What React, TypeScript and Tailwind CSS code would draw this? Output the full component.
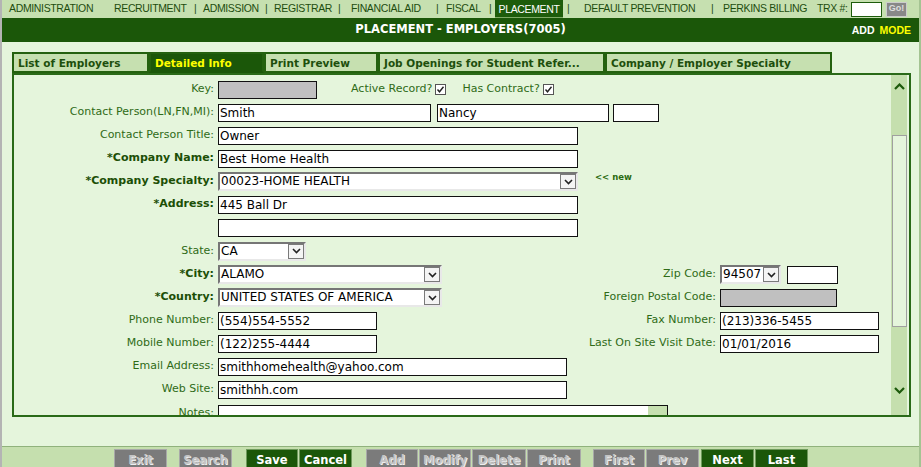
import React from "react";

// nav cells: width of each cell taken from the gap to the next item
const navCells: { label: string; w: string; active?: boolean }[] = [
  { label: "ADMINISTRATION", w: "w-[105px]" },
  { label: "RECRUITMENT", w: "w-[80px]" },
  { label: "|", w: "w-[9px]" },
  { label: "ADMISSION", w: "w-[62px]" },
  { label: "|", w: "w-[9px]" },
  { label: "REGISTRAR", w: "w-[64px]" },
  { label: "|", w: "w-[13px]" },
  { label: "FINANCIAL AID", w: "w-[85px]" },
  { label: "|", w: "w-[10px]" },
  { label: "FISCAL", w: "w-[43px]" },
  { label: "|", w: "w-[6px]" },
  { label: "PLACEMENT", w: "w-[68px]", active: true },
  { label: "", w: "w-[4px]" },
  { label: "|", w: "w-[17px]" },
  { label: "DEFAULT PREVENTION", w: "w-[127px]" },
  { label: "|", w: "w-[12px]" },
  { label: "PERKINS BILLING", w: "w-[94px]" },
  { label: "TRX #:", w: "w-[34px]" },
];

const tabs = [
  { label: "List of Employers", w: "w-[137px]" },
  { label: "Detailed Info", w: "w-[115px]", active: true },
  { label: "Print Preview", w: "w-[114px]" },
  { label: "Job Openings for Student Refer...", w: "w-[227px]" },
  { label: "Company / Employer Specialty", w: "w-[227px]" },
];

const buttons = [
  { label: "Exit", cls: "ml-[112px] w-[53px]" },
  { label: "Search", cls: "ml-[12px] w-[53px]" },
  { label: "Save", cls: "ml-[14px] w-[52px]", on: true },
  { label: "Cancel", cls: "ml-[1px] w-[53px]", on: true },
  { label: "Add", cls: "ml-[14px] w-[52px]" },
  { label: "Modify", cls: "ml-[1px] w-[52px]" },
  { label: "Delete", cls: "ml-[1px] w-[54px]" },
  { label: "Print", cls: "ml-[1px] w-[54px]" },
  { label: "First", cls: "ml-[12px] w-[52px]" },
  { label: "Prev", cls: "ml-[1px] w-[53px]" },
  { label: "Next", cls: "ml-[2px] w-[53px]", on: true },
  { label: "Last", cls: "ml-[1px] w-[53px]", on: true },
];

function Chevron({ up = false }: { up?: boolean }) {
  return (
    <svg width="11" height="7" viewBox="0 0 11 7">
      <path
        d={up ? "M1 6 L5.5 1.5 L10 6" : "M1 1 L5.5 5.5 L10 1"}
        fill="none"
        stroke="#1d5a0c"
        strokeWidth="2.2"
      />
    </svg>
  );
}

function Input({ w, value = "", gray = false }: { w: string; value?: string; gray?: boolean }) {
  return (
    <div
      className={`${w} h-[18px] shrink-0 border border-[#111] ${gray ? "bg-[#c0c0c0]" : "bg-white"} pl-[1px] text-[12px] leading-[16px] text-black whitespace-nowrap overflow-hidden`}
    >
      {value}
    </div>
  );
}

function Select({ w, value }: { w: string; value: string }) {
  return (
    <div className={`${w} h-[19px] shrink-0 flex border-2 border-t-[#767676] border-l-[#767676] border-r-[#e8e8e8] border-b-[#e8e8e8] bg-white`}>
      <div className="flex-1 pl-[1px] text-[12px] leading-[15px] text-black whitespace-nowrap overflow-hidden">{value}</div>
      <div className="w-[16px] h-[15px] border border-[#7a7a7a] bg-[#f4f4f4] flex items-center justify-center">
        <svg width="9" height="6" viewBox="0 0 9 6">
          <path d="M1 1 L4.5 4.5 L8 1" fill="none" stroke="#222" strokeWidth="1.6" />
        </svg>
      </div>
    </div>
  );
}

function Check({ label }: { label: string }) {
  return (
    <div className="flex items-center gap-[3px] whitespace-nowrap text-[#2f6b17]">
      <span>{label}</span>
      <span className="w-[11px] h-[11px] border border-[#555] bg-white flex items-center justify-center">
        <svg width="9" height="9" viewBox="0 0 9 9">
          <path d="M1.5 4.5 L3.5 6.8 L7.5 1.8" fill="none" stroke="#222" strokeWidth="1.4" />
        </svg>
      </span>
    </div>
  );
}

function Label({ text, bold = false, w = "w-[204px]" }: { text: string; bold?: boolean; w?: string }) {
  return (
    <div className={`${w} shrink-0 text-right pr-[4px] whitespace-nowrap ${bold ? "font-bold text-[#1c4f06]" : "text-[#2f6b17]"}`}>
      {text}
    </div>
  );
}

function Row({ children, right }: { children: React.ReactNode; right?: React.ReactNode }) {
  return (
    <div className="h-[23px] flex items-center">
      <div className="w-[450px] shrink-0 flex items-center">{children}</div>
      {right && <div className="flex items-center">{right}</div>}
    </div>
  );
}

export default function App() {
  return (
    <div className="w-[921px] h-[467px] overflow-hidden bg-[#e5f5dc] border-l-2 border-l-[#b4b4b4] border-r-2 border-r-[#a4c492] flex flex-col font-['DejaVu_Sans',sans-serif] text-[11px]">
      {/* top navigation */}
      <div className="h-[18px] shrink-0 bg-[#c6e0b0] flex items-center pl-[7px] font-['Liberation_Sans',sans-serif] text-[10.5px] tracking-[-0.35px] text-[#1e4d0f] whitespace-nowrap">
        {navCells.map((n, i) => (
          <span
            key={i}
            className={`${n.w} shrink-0 ${
              n.active ? "bg-[#1d5c0b] text-white text-center h-[18px] leading-[18px] border-b border-[#7faa66]" : ""
            }`}
          >
            {n.label}
          </span>
        ))}
        <div className="w-[31px] h-[15px] shrink-0 bg-white border border-[#1d5c0b]" />
        <div className="ml-[4px] w-[21px] h-[15px] shrink-0 bg-[#888] border border-[#ccc] text-[9px] font-bold text-[#ddd] tracking-normal flex items-center justify-center">
          Go!
        </div>
      </div>

      {/* title bar */}
      <div className="h-[24px] shrink-0 bg-[#1b5709] relative flex items-center justify-center">
        <span className="text-white font-bold text-[11.5px]">PLACEMENT - EMPLOYERS(7005)</span>
        <span className="absolute right-[8px] top-[5px] font-['Liberation_Sans',sans-serif] font-bold text-[10.5px]">
          <span className="text-white">ADD</span>
          <span className="text-[#ffff00] ml-[5px]">MODE</span>
        </span>
      </div>

      {/* tabs */}
      <div className="mt-[10px] ml-[10px] flex">
        {tabs.map((t) => (
          <div
            key={t.label}
            className={`${t.w} h-[21px] shrink-0 border-2 border-[#24610f] pl-[4px] pt-[2px] font-bold text-[10.5px] whitespace-nowrap ${
              t.active ? "bg-[#1b5709] text-[#ffff00] border-b-[#1b5709]" : "bg-[#c6e0b0] text-[#1d4f0c]"
            }`}
          >
            {t.label}
          </div>
        ))}
      </div>

      {/* content panel */}
      <div className="ml-[10px] w-[899px] h-[344px] shrink-0 border-2 border-[#2a6a18] flex overflow-hidden">
        <div className="flex-1 pt-[3px] overflow-hidden">
          <div className="h-[23px] flex items-center">
            <Label text="Key:" />
            <Input w="w-[99px]" gray />
            <div className="ml-[34px]">
              <Check label="Active Record?" />
            </div>
            <div className="ml-[16px]">
              <Check label="Has Contract?" />
            </div>
          </div>
          <div className="h-[23px] flex items-center">
            <Label text="Contact Person(LN,FN,MI):" />
            <Input w="w-[213px]" value="Smith" />
            <div className="ml-[6px]">
              <Input w="w-[172px]" value="Nancy" />
            </div>
            <div className="ml-[4px]">
              <Input w="w-[46px]" />
            </div>
          </div>
          <div className="h-[23px] flex items-center">
            <Label text="Contact Person Title:" />
            <Input w="w-[360px]" value="Owner" />
          </div>
          <div className="h-[23px] flex items-center">
            <Label text="*Company Name:" bold />
            <Input w="w-[360px]" value="Best Home Health" />
          </div>
          <div className="h-[23px] flex items-center">
            <Label text="*Company Specialty:" bold />
            <Select w="w-[360px]" value="00023-HOME HEALTH" />
            <span className="ml-[17px] -mt-[8px] text-[8.5px] font-bold text-[#2a6a10] whitespace-nowrap">&lt;&lt; new</span>
          </div>
          <div className="h-[23px] flex items-center">
            <Label text="*Address:" bold />
            <Input w="w-[360px]" value="445 Ball Dr" />
          </div>
          <div className="h-[23px] flex items-center">
            <Label text="" />
            <Input w="w-[360px]" />
          </div>
          <div className="h-[24px] flex items-center">
            <Label text="State:" />
            <Select w="w-[88px]" value="CA" />
          </div>
          <Row
            right={
              <>
                <Label text="Zip Code:" w="w-[256px]" />
                <Select w="w-[61px]" value="94507" />
                <div className="ml-[6px]">
                  <Input w="w-[51px]" />
                </div>
              </>
            }
          >
            <Label text="*City:" bold />
            <Select w="w-[224px]" value="ALAMO" />
          </Row>
          <Row
            right={
              <>
                <Label text="Foreign Postal Code:" w="w-[256px]" />
                <Input w="w-[117px]" gray />
              </>
            }
          >
            <Label text="*Country:" bold />
            <Select w="w-[224px]" value="UNITED STATES OF AMERICA" />
          </Row>
          <Row
            right={
              <>
                <Label text="Fax Number:" w="w-[256px]" />
                <Input w="w-[159px]" value="(213)336-5455" />
              </>
            }
          >
            <Label text="Phone Number:" />
            <Input w="w-[159px]" value="(554)554-5552" />
          </Row>
          <Row
            right={
              <>
                <Label text="Last On Site Visit Date:" w="w-[256px]" />
                <Input w="w-[159px]" value="01/01/2016" />
              </>
            }
          >
            <Label text="Mobile Number:" />
            <Input w="w-[159px]" value="(122)255-4444" />
          </Row>
          <div className="h-[23px] flex items-center">
            <Label text="Email Address:" />
            <Input w="w-[349px]" value="smithhomehealth@yahoo.com" />
          </div>
          <div className="h-[23px] flex items-center">
            <Label text="Web Site:" />
            <Input w="w-[349px]" value="smithhh.com" />
          </div>
          <div className="h-[40px] flex items-start pt-[4px]">
            <Label text="Notes:" />
            <div className="w-[450px] h-[40px] shrink-0 border border-[#111] bg-white flex justify-end">
              <div className="w-[19px] bg-[#c6e0b0]" />
            </div>
          </div>
        </div>
        {/* scrollbar */}
        <div className="w-[16px] mr-[2px] bg-[#c5dfae] flex flex-col items-center">
          <div className="h-[23px] flex items-center justify-center">
            <Chevron up />
          </div>
          <div className="mt-[37px] w-[15px] h-[192px] border border-[#a0a0a0] bg-[#e5f5dc]" />
          <div className="flex-1" />
          <div className="h-[40px] flex items-center justify-center pb-[10px]">
            <Chevron />
          </div>
        </div>
      </div>

      <div className="flex-1" />

      {/* bottom toolbar */}
      <div className="h-[21px] shrink-0 bg-[#c5dfae] border-t border-[#90b27c] flex items-start pt-[2px] overflow-hidden">
        {buttons.map((b) => (
          <div
            key={b.label}
            className={`${b.cls} h-[24px] shrink-0 border flex items-center justify-center font-bold text-[11.5px] ${
              b.on
                ? "bg-[#1b5709] border-[#6f9a5c] text-white"
                : "bg-[#7b7b7b] border-[#a8a8a8] text-[#c4c4c4] [text-shadow:1px_1px_0_#eeeeee]"
            }`}
          >
            {b.label}
          </div>
        ))}
      </div>
    </div>
  );
}
